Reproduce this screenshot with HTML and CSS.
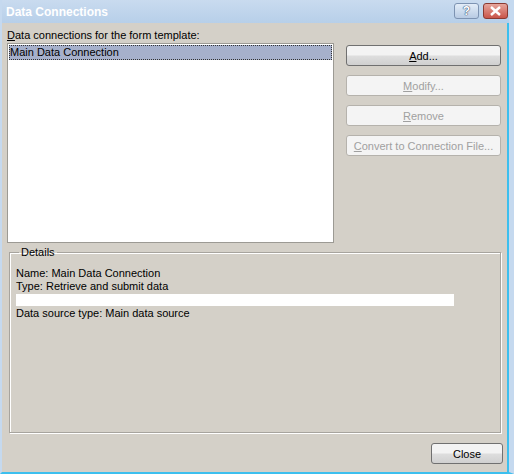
FILE: index.html
```html
<!DOCTYPE html>
<html lang="en">

<head>
    <meta charset="UTF-8">
    <title>Data Connections</title>
    <link rel="stylesheet" href="styles.css">
</head>

<body>
    <div class="window">
        <div class="titlebar">
            <span class="title">Data Connections</span>
            <div class="title-buttons">
                <span class="tbtn help">?</span>
                <span class="tbtn close">
                    <svg width="13" height="10" viewBox="0 0 13 10">
                        <path d="M2 1 L11 9 M11 1 L2 9" stroke="#fff" stroke-width="2.4" />
                    </svg>
                </span>
            </div>
        </div>
        <div class="content">
            <div class="top">
                <div class="list-col">
                    <div class="label"><u>D</u>ata connections for the form template:</div>
                    <div class="listbox">
                        <div class="item selected">Main Data Connection</div>
                    </div>
                </div>
                <div class="btn-col">
                    <button class="btn"><u>A</u>dd...</button>
                    <button class="btn" disabled><u>M</u>odify...</button>
                    <button class="btn" disabled><u>R</u>emove</button>
                    <button class="btn" disabled><u>C</u>onvert to Connection File...</button>
                </div>
            </div>
            <fieldset class="details">
                <legend>Details</legend>
                <div class="line">Name: Main Data Connection</div>
                <div class="line">Type: Retrieve and submit data</div>
                <div class="bar"></div>
                <div class="line">Data source type: Main data source</div>
            </fieldset>
            <div class="footer">
                <button class="btn close-btn">Close</button>
            </div>
        </div>
    </div>
</body>

</html>
```

FILE: styles.css
```css
body {
    margin: 0;
    font-family: "Liberation Sans", Arial, sans-serif;
    font-size: 11px;
    color: #000;
}

.window {
    width: 514px;
    height: 474px;
    box-sizing: border-box;
    background: #d4d0c8;
    border-left: 2px solid #c5d9ef;
    border-right: 5px solid #c5d9ef;
    border-bottom: 2px solid #3cbfee;
    box-shadow: inset -2px 0 0 #3cbfee;
    overflow: hidden;
}

.titlebar {
    height: 23px;
    display: flex;
    align-items: center;
    justify-content: space-between;
    background: linear-gradient(#c9dbef, #b7cfe9);
    padding: 0 1px 0 4px;
}

.title {
    color: #fff;
    font-weight: bold;
    font-size: 12px;
    margin-top: 1px;
}

.title-buttons {
    display: flex;
    gap: 4px;
    margin-top: -1px;
}

.tbtn {
    width: 25px;
    height: 16px;
    border-radius: 3px;
    display: flex;
    align-items: center;
    justify-content: center;
    box-sizing: border-box;
}

.help {
    border: 1px solid #7d93b2;
    background: linear-gradient(#e3edf8, #b8cbe3);
    color: #fff;
    font-weight: bold;
    font-size: 12px;
    text-shadow: 0 0 1px #3d5475, 0 0 1px #3d5475, 0 0 1px #3d5475;
}

.close {
    border: 1px solid #8a3a32;
    background: linear-gradient(#e6a59c, #c9554a);
}

.content {
    padding: 0 0 0 5px;
}

.top {
    display: flex;
    gap: 12px;
}

.label {
    height: 20px;
    line-height: 14px;
    padding-top: 5px;
    box-sizing: border-box;
}

.listbox {
    width: 327px;
    height: 200px;
    box-sizing: border-box;
    background: #fff;
    border: 1px solid #9c9a94;
    padding: 1px;
}

.item {
    height: 15px;
    line-height: 14px;
    padding-left: 1px;
}

.selected {
    background: #a6b0cb;
    outline: 1px dotted #333;
    outline-offset: -1px;
}

.btn-col {
    display: flex;
    flex-direction: column;
    gap: 9px;
    padding-top: 22px;
}

.btn {
    width: 155px;
    height: 21px;
    font-family: inherit;
    font-size: 11px;
    color: #000;
    border: 1px solid #707070;
    border-radius: 3px;
    background: linear-gradient(#f3f3f3 45%, #dddddd 55%, #d0d0d0);
    padding: 0;
}

.btn:disabled {
    color: #a0a0a0;
    border-color: #b5b2ac;
    background: #f4f4f4;
}

.details {
    margin: 3px 0 0 2px;
    width: 492px;
    height: 187px;
    box-sizing: border-box;
    border: 1px solid #a7a49e;
    box-shadow: 1px 1px 0 #fff, inset 1px 1px 0 #fff;
    padding: 9px 0 0 6px;
}

.details legend {
    padding: 0 2px;
    margin-left: 3px;
}

.line {
    height: 13px;
    line-height: 13px;
}

.bar {
    width: 438px;
    height: 12px;
    background: #fff;
    margin: 1px 0 1px;
}

.footer {
    display: flex;
    justify-content: flex-end;
    padding: 10px 6px 0 0;
}

.close-btn {
    width: 72px;
}
```
